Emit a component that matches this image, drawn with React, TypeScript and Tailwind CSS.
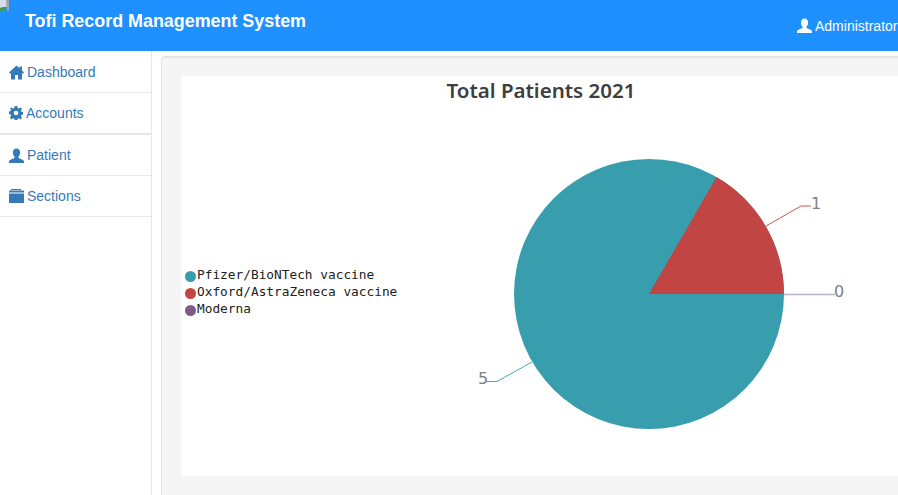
import React from 'react';

const userPath = 'M7 0.500c2.100 0 3.400 1.600 3.400 3.700 0 1.500-.6 2.900-1.500 3.700-.3.3-.3 1 0 1.300.4.500 1.500.9 2.700 1.400 1.100.5 1.900 1 2.400 1.500v1.900H0v-1.900c.5-.5 1.300-1 2.400-1.500 1.200-.5 2.300-.9 2.700-1.400.3-.3.3-1 0-1.300-.9-.8-1.500-2.200-1.500-3.700C3.600 2.100 4.900.5 7 .5z';

function HomeIcon() {
  return (
    <svg width="15" height="15" viewBox="0 0 15 15" className="fill-[#337ab7] shrink-0">
      <path d="M7.500 0.500 10.500 3.300V1.500h2.500v4.100L15 7.500 14.200 8.500H13V14.500H9V10H6V14.500H2V8.500H.8L0 7.500z" />
    </svg>
  );
}

function CogIcon() {
  return (
    <svg width="14" height="14" viewBox="0 0 14 14" className="fill-[#337ab7] shrink-0">
      <path
        fillRule="evenodd"
        d="M5.700 0h2.600l.4 2 1.200.5L11.600 1.400l1.400 1.400-1.100 1.700.5 1.200 1.600.4v2.600l-1.600.4-.5 1.200 1.100 1.700-1.400 1.400-1.700-1.100-1.200.5-.4 1.800H5.700l-.4-1.800-1.200-.5-1.700 1.100L1 11.300l1.100-1.700-.5-1.200L0 8V5.400l1.600-.4.5-1.200L1 2.800l1.400-1.400 1.700 1.100 1.200-.5zM7 4.700a2.300 2.300 0 1 0 0 4.600 2.300 2.300 0 0 0 0-4.600z"
      />
    </svg>
  );
}

function UserIcon({ className }: { className: string }) {
  return (
    <svg width="15" height="15" viewBox="0 0 14 14" className={className}>
      <path d={userPath} />
    </svg>
  );
}

function SectionsIcon() {
  return (
    <svg width="15" height="14" viewBox="0 0 15 14" className="fill-[#337ab7] shrink-0">
      <path d="M2 0h10v1H2zM0 1.500h15V3.500H0zM0 4.500h15V14H0z" />
    </svg>
  );
}

const links = [
  { label: 'Dashboard', icon: <HomeIcon />, row: 'h-[42px] pt-[1px] border-b border-[#e7e7e7]', gap: 'gap-[3px]' },
  { label: 'Accounts', icon: <CogIcon />, row: 'h-[42px] border-b-2 border-[#e7e7e7]', gap: 'gap-[3px]' },
  { label: 'Patient', icon: <UserIcon className="fill-[#337ab7] shrink-0" />, row: 'h-[41px] border-b border-[#e7e7e7]', gap: 'gap-[3px]' },
  { label: 'Sections', icon: <SectionsIcon />, row: 'h-[41px] border-b border-[#e7e7e7]', gap: 'gap-[3px]' },
];

function PieChart() {
  // svg origin sits at page x=430, y=104
  return (
    <svg width="470" height="372" viewBox="430 104 470 372" className="shrink-0">
      <circle cx="649" cy="294" r="135" fill="#389eae" />
      <path d="M649 294 L784 294 A135 135 0 0 0 716.500 177.100 Z" fill="#c14543" />
      <path d="M784 294.500H835" stroke="#bcaec6" strokeWidth="1.500" fill="none" />
      <path d="M766 226 L801 206 H811" stroke="#cf5855" strokeWidth="1" fill="none" />
      <path d="M532 362 L497 381.500 H487" stroke="#4ba8b8" strokeWidth="1" fill="none" />
      <text x="811" y="209" fontSize="16" fill="#808080" fontFamily="'DejaVu Sans', sans-serif">1</text>
      <text x="834" y="297" fontSize="16" fill="#808080" fontFamily="'DejaVu Sans', sans-serif">0</text>
      <text x="478" y="384" fontSize="16" fill="#808080" fontFamily="'DejaVu Sans', sans-serif">5</text>
    </svg>
  );
}

const legend = [
  { label: 'Pfizer/BioNTech vaccine', dot: 'bg-[#389eae]' },
  { label: 'Oxford/AstraZeneca vaccine', dot: 'bg-[#c14543]' },
  { label: 'Moderna', dot: 'bg-[#7d5b84]' },
];

export default function App() {
  return (
    <div className="relative w-[898px] h-[495px] overflow-hidden bg-white font-['Liberation_Sans',sans-serif]">
      {/* header */}
      <div className="flex justify-between h-[51px] bg-[#1e90ff] text-white w-[898px]">
        <div className="pl-[25px] pt-[10px] text-[17.900px] leading-[22px] font-bold">Tofi Record Management System</div>
        <div className="flex items-center gap-[3px] pt-[1px] text-[14px] whitespace-nowrap shrink-0 w-[101px]">
          <UserIcon className="fill-white shrink-0 -mt-[1px]" />
          <span>Administrator</span>
        </div>
      </div>

      {/* broken image placeholder */}
      <svg width="9" height="12" viewBox="0 0 9 12" className="absolute left-0 top-0">
        <path d="M0 0h9v6l-9 2z" fill="#d5dee8" />
        <path d="M6 0h3v11H7z" fill="#9aa3a8" />
        <path d="M0 8l4-1 2 3-6 1z" fill="#4c9a3a" />
      </svg>

      <div className="flex h-[444px]">
        {/* sidebar */}
        <div className="w-[152px] shrink-0 border-r border-[#e7e7e7]">
          {links.map((l) => (
            <div key={l.label} className={`flex items-center pl-[9px] text-[14px] text-[#337ab7] ${l.row} ${l.gap}`}>
              {l.icon}
              <span>{l.label}</span>
            </div>
          ))}
        </div>

        {/* main panel */}
        <div className="mt-[5px] ml-[9px] w-[760px] shrink-0 h-[460px] bg-[#f5f5f5] border border-[#e3e3e3] rounded-[4px] shadow-[inset_0_1px_1px_rgba(0,0,0,0.05)] pl-[19px] pt-[19px]">
          <div className="w-[720px] h-[400px] bg-white flex flex-col">
            <div className="h-[28px] text-center text-[#3e3e3e] font-['Noto_Sans',sans-serif] font-semibold text-[20.500px] leading-[28px]">
              Total Patients 2021
            </div>
            <div className="flex items-center h-[372px]">
              <div className="w-[249px] shrink-0 pl-[4px] pt-[2px] font-['DejaVu_Sans_Mono',monospace] text-[12.800px] leading-[17px] text-[#222]">
                {legend.map((d) => (
                  <div key={d.label} className="flex items-center gap-[1px] whitespace-nowrap">
                    <span className={`w-[11px] h-[11px] rounded-full shrink-0 mt-[4px] ${d.dot}`} />
                    <span>{d.label}</span>
                  </div>
                ))}
              </div>
              <PieChart />
            </div>
          </div>
        </div>
      </div>
    </div>
  );
}
